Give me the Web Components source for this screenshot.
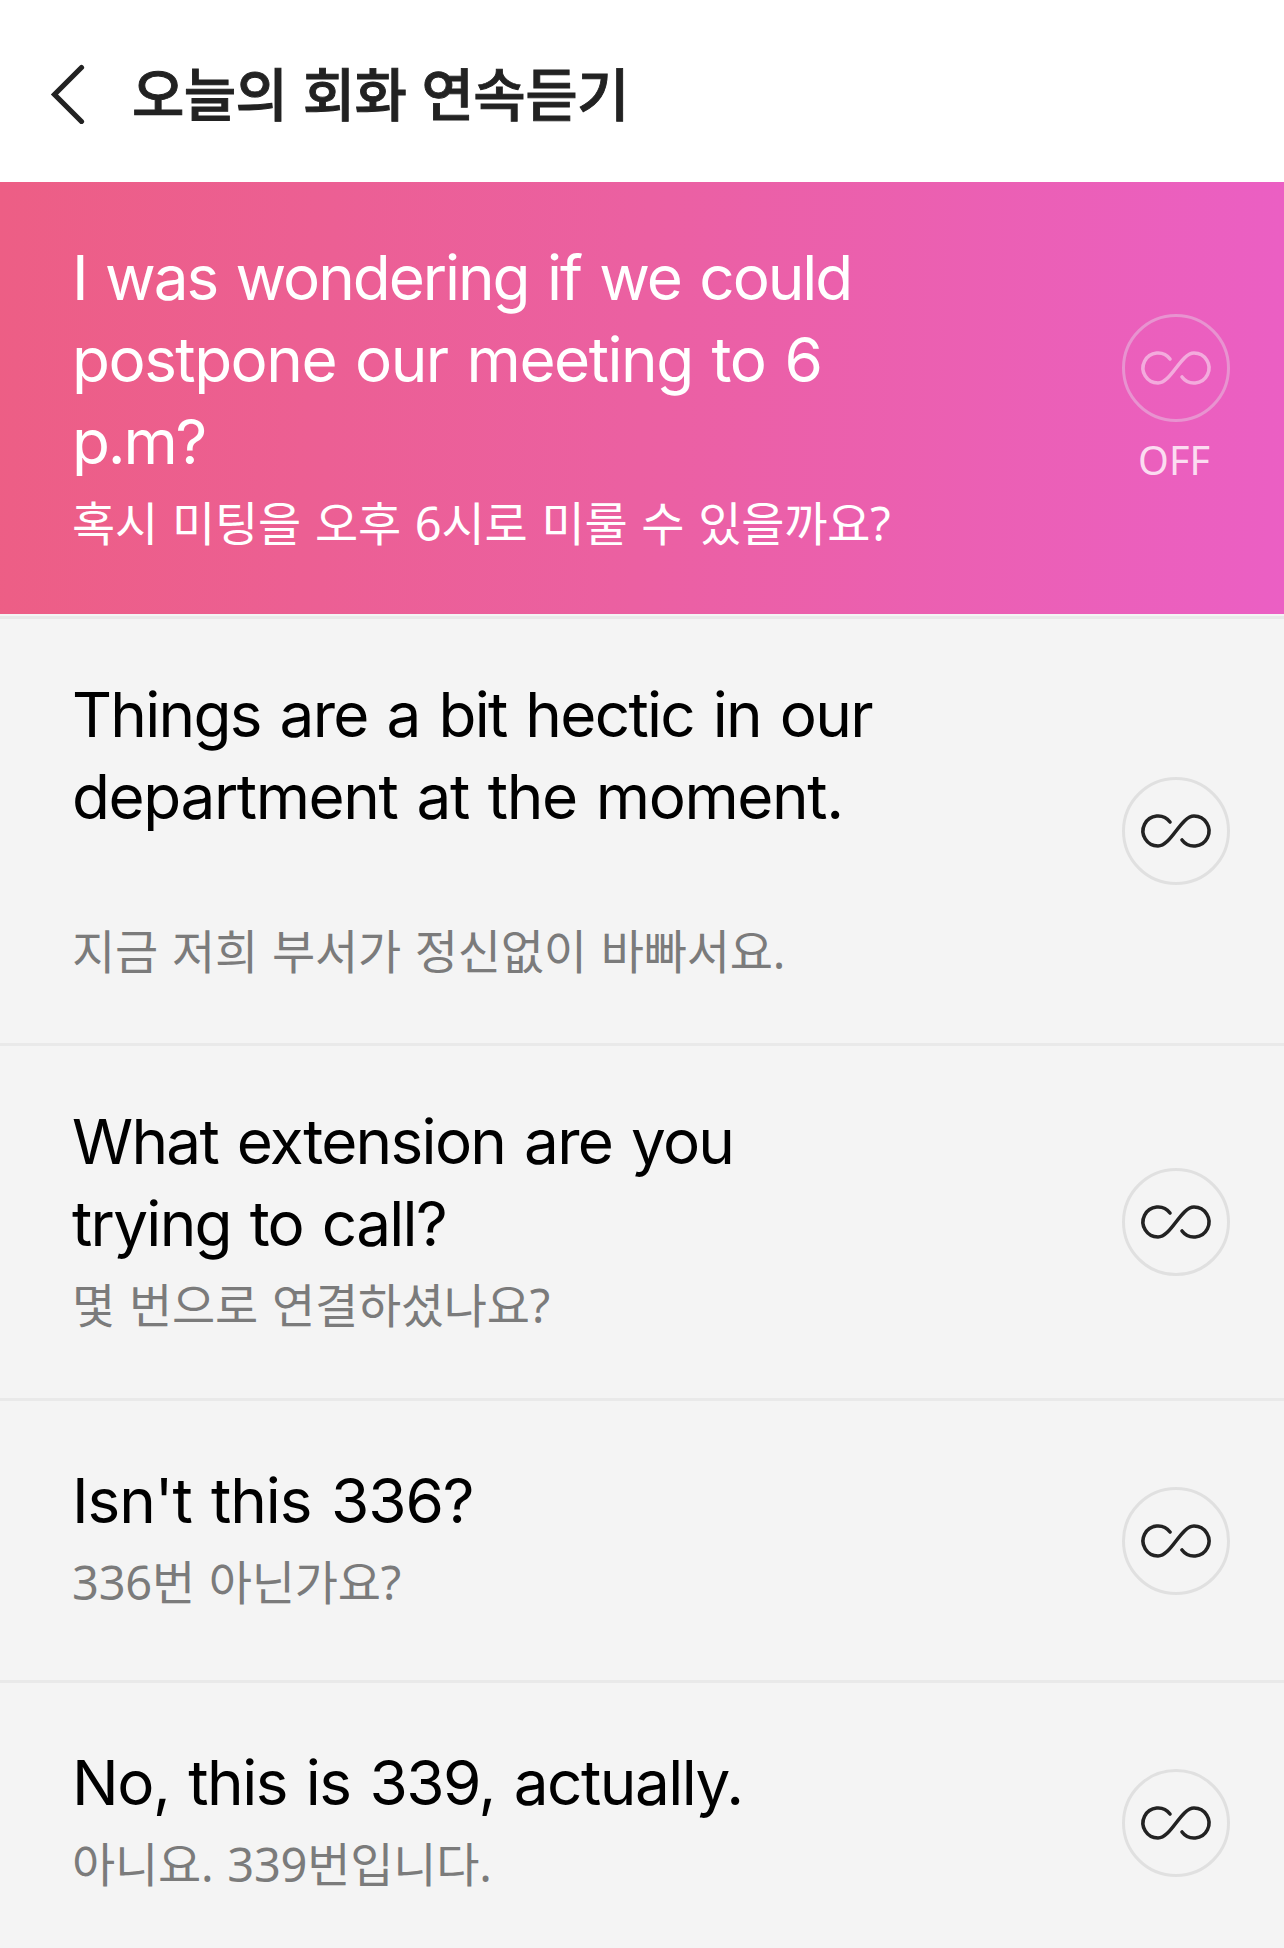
<!DOCTYPE html>
<html lang="ko">
<head>
<meta charset="utf-8">
<title>오늘의 회화 연속듣기</title>
<style>
	body {
		margin: 0;
		height: 1948px;
		overflow: hidden;
		background: #f4f4f4;
		font-family: Inter, "Noto Sans CJK KR", sans-serif;
	}
</style>
</head>
<body>
<talk-header>오늘의 회화 연속듣기</talk-header>
<talk-list>
	<talk-item active>
		<talk-line style="--tracking: -2.05px">I was wondering if we could</talk-line>
		<talk-line style="--tracking: -1.5px">postpone our meeting to 6</talk-line>
		<talk-line style="--tracking: -2.2px">p.m?</talk-line>
		<span slot="translation">혹시 미팅을 오후 6시로 미룰 수 있을까요?</span>
		<loop-button slot="action" off>OFF</loop-button>
	</talk-item>
	<talk-item spaced>
		<talk-line>Things are a bit hectic in our</talk-line>
		<talk-line style="--tracking: -1.4px">department at the moment.</talk-line>
		<span slot="translation">지금 저희 부서가 정신없이 바빠서요.</span>
		<loop-button slot="action"></loop-button>
	</talk-item>
	<talk-item>
		<talk-line>What extension are you</talk-line>
		<talk-line>trying to call?</talk-line>
		<span slot="translation">몇 번으로 연결하셨나요?</span>
		<loop-button slot="action"></loop-button>
	</talk-item>
	<talk-item short>
		<talk-line style="--tracking: -1.05px">Isn't this 336?</talk-line>
		<span slot="translation">336번 아닌가요?</span>
		<loop-button slot="action"></loop-button>
	</talk-item>
	<talk-item short>
		<talk-line style="--tracking: -1.5px">No, this is 339, actually.</talk-line>
		<span slot="translation">아니요. 339번입니다.</span>
		<loop-button slot="action"></loop-button>
	</talk-item>
</talk-list>

<script>
const headerTemplate = document.createElement('template')

headerTemplate.innerHTML = `
	<style>
		:host {
			display: flex;
			align-items: center;
			height: 182px;
			padding: 6px 0 0 48px;
			box-sizing: border-box;
			background: #fff;
			color: #222;
		}

		.back {
			display: flex;
			margin-right: 47px;
			padding: 0 0 1px;
			border: none;
			background: none;
			color: inherit;
		}

		.title {
			margin: 0;
			padding-bottom: 7px;
			font: 500 57px/80px "Noto Sans CJK KR", sans-serif;
			letter-spacing: -0.65px;
			-webkit-text-stroke: 0.9px currentColor;
			white-space: nowrap;
		}
	</style>

	<button class="back" aria-label="back">
		<svg width="37" height="60" viewBox="0 0 37 60" fill="none" stroke="currentColor" stroke-width="5.2" stroke-linecap="round" stroke-linejoin="miter">
			<path d="M33.5 3.5 6.5 30.5 33.5 57.5" />
		</svg>
	</button>
	<h1 class="title"><slot></slot></h1>
`

class TalkHeader extends HTMLElement {
	constructor() {
		super()

		this.attachShadow({ mode: 'open' })
		this.shadowRoot.appendChild(headerTemplate.content.cloneNode(true))
	}
}

window.customElements.define('talk-header', TalkHeader)

const listTemplate = document.createElement('template')

listTemplate.innerHTML = `
	<style>
		:host {
			display: flex;
			flex-direction: column;
		}
	</style>

	<slot></slot>
`

class TalkList extends HTMLElement {
	constructor() {
		super()

		this.attachShadow({ mode: 'open' })
		this.shadowRoot.appendChild(listTemplate.content.cloneNode(true))
	}
}

window.customElements.define('talk-list', TalkList)

const lineTemplate = document.createElement('template')

lineTemplate.innerHTML = `
	<style>
		:host {
			display: block;
			letter-spacing: var(--tracking, -1.7px);
			word-spacing: 3px;
			white-space: nowrap;
		}
	</style>

	<slot></slot>
`

class TalkLine extends HTMLElement {
	constructor() {
		super()

		this.attachShadow({ mode: 'open' })
		this.shadowRoot.appendChild(lineTemplate.content.cloneNode(true))
	}
}

window.customElements.define('talk-line', TalkLine)

const itemTemplate = document.createElement('template')

itemTemplate.innerHTML = `
	<style>
		:host {
			display: flex;
			align-items: center;
			justify-content: space-between;
			padding: 0 54px 0 72px;
			border-top: 3px solid #e9e9e9;
			color: #000;
		}

		:host([active]) {
			margin-bottom: 2px;
			border-top: none;
			background: linear-gradient(92deg, #ed5e85, #eb60a2 50%, #eb5fc4);
			color: #fff;
		}

		.text {
			padding: 55px 0 60px;
		}

		:host([active]) .text {
			padding-bottom: 58px;
		}

		:host([spaced]) .text {
			padding-bottom: 59px;
		}

		:host([short]) .text {
			padding: 59px 0 65px;
		}

		.sentence {
			font-size: 62px;
			line-height: 82px;
		}

		.translation {
			margin: 0;
			padding-top: 8px;
			font: 400 47px/65px "Noto Sans", "Noto Sans CJK KR", sans-serif;
			letter-spacing: -0.25px;
			word-spacing: 2px;
			color: #7b7b7b;
			white-space: nowrap;
		}

		:host([active]) .translation {
			color: #fff;
		}

		:host([spaced]) .translation {
			padding-top: 81px;
		}
	</style>

	<div class="text">
		<div class="sentence"><slot></slot></div>
		<p class="translation"><slot name="translation"></slot></p>
	</div>
	<slot name="action"></slot>
`

class TalkItem extends HTMLElement {
	constructor() {
		super()

		this.attachShadow({ mode: 'open' })
		this.shadowRoot.appendChild(itemTemplate.content.cloneNode(true))
	}
}

window.customElements.define('talk-item', TalkItem)

const loopTemplate = document.createElement('template')

loopTemplate.innerHTML = `
	<style>
		:host {
			display: flex;
			flex-direction: column;
			align-items: center;
			width: 108px;
			font: 400 39.5px/43px "Noto Sans", sans-serif;
			color: #fbdcf1;
		}

		.ring {
			stroke: #e0e0e0;
		}

		.loop {
			stroke: #222;
		}

		:host([off]) .ring {
			stroke: #e893d0;
		}

		:host([off]) .loop {
			stroke: #f3abdd;
		}

		.label {
			display: none;
		}

		:host([off]) .label {
			display: block;
			margin-top: 17px;
			padding-right: 4px;
		}
	</style>

	<svg width="108" height="108" viewBox="-54 -54 108 108" fill="none">
		<circle class="ring" r="52.5" stroke-width="3" />
		<path class="loop" d="M-6 -9A15 15 0 1 0 -18 15C-5 15 5 -15 18 -15A15 15 0 1 1 6 9" stroke-width="3.6" stroke-linecap="round" />
	</svg>
	<span class="label"><slot></slot></span>
`

class LoopButton extends HTMLElement {
	constructor() {
		super()

		this.attachShadow({ mode: 'open' })
		this.shadowRoot.appendChild(loopTemplate.content.cloneNode(true))
	}
}

window.customElements.define('loop-button', LoopButton)
</script>
</body>
</html>
